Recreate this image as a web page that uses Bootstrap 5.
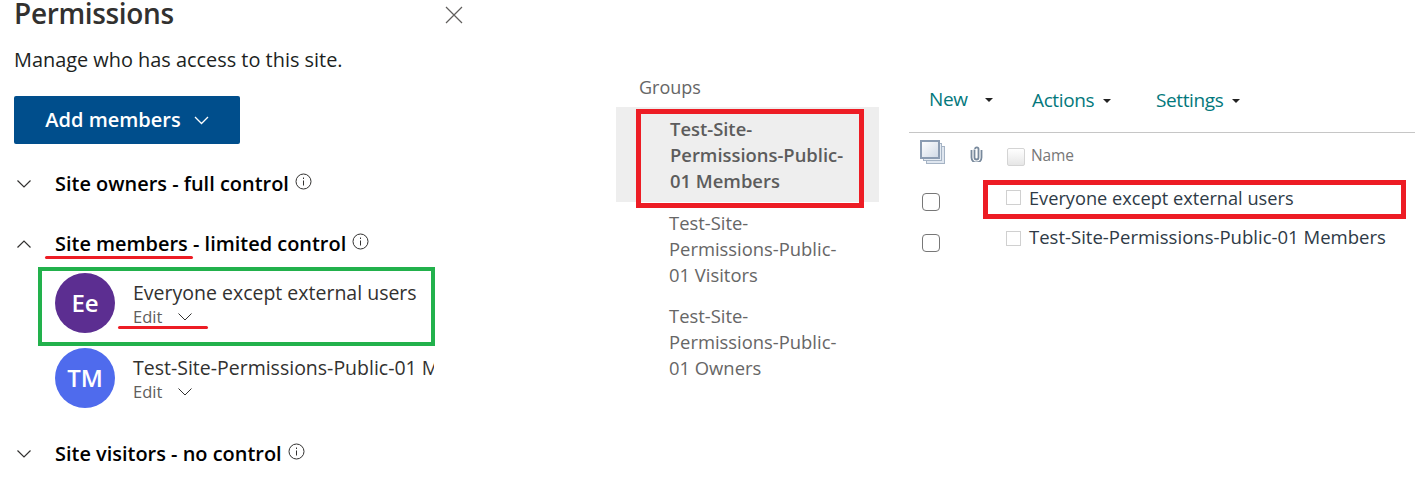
<!doctype html>
<html lang="en"><head><meta charset="utf-8"><title>Permissions</title>
<link rel="stylesheet" href="https://cdn.jsdelivr.net/npm/bootstrap@5.3.0/dist/css/bootstrap.min.css">
<style>
html,body{height:487px;overflow:hidden}
body{font-family:"Open Sans","Noto Sans","Liberation Sans",sans-serif;background:#fff;position:relative}
.left-pane{width:434px;padding-left:15px;margin-right:182px;flex:none}
.title-row{height:26px;align-items:center;width:448px}
.pane-title{font-size:28px;font-weight:600;color:#323130;margin:0 0 0 -1px;line-height:24px;letter-spacing:-.012em}
.close-x{margin-left:auto;margin-top:3px}
.pane-sub{font-size:19.9px;color:#201f1e;margin:21px 0 0 -1px;line-height:26px}
.add-btn{margin:23px 0 0 -1px;width:226px;height:48px;background:#004e8c;color:#fff;font-size:20px;font-weight:600;border:0;border-radius:2px;padding:0;gap:13px;--bs-btn-hover-bg:#004e8c}
.sec-row{font-size:19.95px;font-weight:600;color:#000;line-height:26px;height:26px}
.sec-chev{width:40px;flex:none;padding-left:2px}
.sec-one{margin-top:27px}.sec-two{margin-top:34px}.sec-three{margin-top:33px}
.info-i{margin:-5px 0 0 6px}
.member{height:60px;margin-left:40px;gap:18px;width:379px;overflow:hidden;white-space:nowrap}
.member-one{margin-top:16px}.member-two{margin-top:15px}
.avatar{width:60px;height:60px;border-radius:50%;color:#fff;font-size:24px;font-weight:600;flex:none}
.av-purple{background:#5c2e91}.av-blue{background:#4f6bed}
.m-name{font-size:19.5px;line-height:26px;color:#323130;margin-top:7px}
.m-edit{font-size:16.5px;line-height:22px;color:#605e5c;gap:16px}
.mid-pane{width:263px;margin-right:30px;flex:none;padding-top:75px}
.grp-head{font-size:18px;line-height:25px;color:#666;padding-left:23px;height:32px}
.grp-item{font-size:18.4px;line-height:26px;color:#666;padding:9px 30px 8px 53px}
.grp-active{background:#eee;font-weight:600;padding:9px 20px 8px 54px;color:#5c5c5c}
.grp-plain{padding-bottom:7px;padding-top:8px}
.right-pane{flex:1 1 auto;min-width:0}
.toolbar{margin-top:76px;border-bottom:1px solid #c6c6c6;padding:11px 0 0 20px;font-size:19px;color:#03787c;line-height:26px;box-sizing:content-box;height:45px;align-items:flex-start;letter-spacing:-.02em}
.tool-item{gap:9px}
.caret-tri{width:0;height:0;border-left:4.5px solid transparent;border-right:4.5px solid transparent;border-top:4.5px solid #222;margin-top:1px}
.tb-new{width:103px;margin-top:-1px}.tb-act{width:124px}
.name-head{margin-left:11px;height:55px;align-items:flex-start;padding-top:7px}
.att-ico{margin:6px 0 0 24px}
.hd-box{width:18px;height:18px;border:1px solid #d4d4d4;border-radius:2px;background:linear-gradient(#fff,#e6e6e6);margin:8px 6px 0 24px}
.hd-name{font-size:15.5px;color:#777;margin-top:4px;letter-spacing:-.01em}
.row-line{height:41px;margin-left:13px}
.chk{width:18px;height:18px;border:1px solid #777;border-radius:4px;background:#fff;flex:none;margin-top:5px}
.sq{width:15px;height:15px;border:1px solid #d0d0d0;flex:none;margin:2px 8px 0 66px}
.nm{font-size:18.2px;color:#2e3a46;white-space:nowrap;line-height:26px;margin-top:-3px}
.nm-long{font-size:18.55px;margin-top:-5px}
.mark-box{position:absolute;pointer-events:none}
.mk-red{border:5px solid #ed1c24}
.mk-green{border:4px solid #22b14c}
.ul-red{position:absolute;height:3px;background:#ed1c24;border-radius:2px}
</style></head>
<body>
<div class="d-flex align-items-start">
  <div class="left-pane">
    <div class="d-flex title-row">
      <h1 class="pane-title">Permissions</h1>
      <svg class="close-x" width="18" height="18" viewBox="0 0 18 18" fill="none" stroke="#605e5c" stroke-width="1.2"><path d="M1 1l16 16M17 1L1 17"/></svg>
    </div>
    <p class="pane-sub">Manage who has access to this site.</p>
    <button class="btn add-btn d-flex align-items-center justify-content-center">Add members
      <svg width="15" height="9" viewBox="0 0 15 9" fill="none" stroke="#fff" stroke-width="1.3"><path d="M1 1l6.500 6.500L14 1"/></svg></button>
    <div class="d-flex align-items-center sec-row sec-one">
      <span class="sec-chev"><svg class="d-block" width="14" height="8" viewBox="0 0 14 8" fill="none" stroke="#323130" stroke-width="1.2"><path d="M.5.5L7 7l6.500-6.500"/></svg></span>
      <span>Site owners - full control</span>
      <svg class="info-i" width="17" height="17" viewBox="0 0 17 17" fill="none" stroke="#323130"><circle cx="8.500" cy="8.500" r="7.500"/><path d="M8.500 7.500v5M8.500 4.500v1.500"/></svg>
    </div>
    <div class="d-flex align-items-center sec-row sec-two">
      <span class="sec-chev"><svg class="d-block" width="14" height="8" viewBox="0 0 14 8" fill="none" stroke="#323130" stroke-width="1.2"><path d="M.5 7.500L7 1l6.500 6.500"/></svg></span>
      <span>Site members - limited control</span>
      <svg class="info-i" width="17" height="17" viewBox="0 0 17 17" fill="none" stroke="#323130"><circle cx="8.500" cy="8.500" r="7.500"/><path d="M8.500 7.500v5M8.500 4.500v1.500"/></svg>
    </div>
    <div class="d-flex member member-one">
      <div class="avatar av-purple d-flex align-items-center justify-content-center">Ee</div>
      <div><div class="m-name">Everyone except external users</div>
        <div class="m-edit d-flex align-items-center">Edit <svg width="14" height="8" viewBox="0 0 14 8" fill="none" stroke="#323130" stroke-width="1"><path d="M.5.5L7 7l6.500-6.500"/></svg></div></div>
    </div>
    <div class="d-flex member member-two">
      <div class="avatar av-blue d-flex align-items-center justify-content-center">TM</div>
      <div><div class="m-name">Test-Site-Permissions-Public-01 Members</div>
        <div class="m-edit d-flex align-items-center">Edit <svg width="14" height="8" viewBox="0 0 14 8" fill="none" stroke="#323130" stroke-width="1"><path d="M.5.5L7 7l6.500-6.500"/></svg></div></div>
    </div>
    <div class="d-flex align-items-center sec-row sec-three">
      <span class="sec-chev"><svg class="d-block" width="14" height="8" viewBox="0 0 14 8" fill="none" stroke="#323130" stroke-width="1.2"><path d="M.5.5L7 7l6.500-6.500"/></svg></span>
      <span>Site visitors - no control</span>
      <svg class="info-i" width="17" height="17" viewBox="0 0 17 17" fill="none" stroke="#323130"><circle cx="8.500" cy="8.500" r="7.500"/><path d="M8.500 7.500v5M8.500 4.500v1.500"/></svg>
    </div>
  </div>
  <div class="mid-pane">
    <div class="grp-head">Groups</div>
    <div class="grp-item grp-active">Test-Site-Permissions-Public-01 Members</div>
    <div class="grp-item grp-plain">Test-Site-Permissions-Public-01 Visitors</div>
    <div class="grp-item grp-plain">Test-Site-Permissions-Public-01 Owners</div>
  </div>
  <div class="right-pane">
    <div class="toolbar d-flex">
      <div class="d-flex align-items-center tool-item tb-new"><span>New</span><span class="caret-tri ms-2"></span></div>
      <div class="d-flex align-items-center tool-item tb-act"><span>Actions</span><span class="caret-tri"></span></div>
      <div class="d-flex align-items-center tool-item"><span>Settings</span><span class="caret-tri"></span></div>
    </div>
    <div class="d-flex name-head">
      <svg width="26" height="25" viewBox="0 0 26 25"><defs><linearGradient id="stk" x1="0" y1="0" x2="1" y2="1"><stop offset="0" stop-color="#fff"/><stop offset="1" stop-color="#cfd9e6"/></linearGradient></defs><rect x="6.500" y="6.500" width="18" height="17" fill="#dfe6ef" stroke="#a5b3c4"/><rect x="3.500" y="3.500" width="18" height="17" fill="#e6ecf3" stroke="#a5b3c4"/><rect x="1" y="1" width="18" height="17" fill="url(#stk)" stroke="#8b9cb2" stroke-width="2"/></svg>
      <svg class="att-ico" width="13" height="16" viewBox="0 0 13 16" fill="none" stroke="#78899c" stroke-width="1.8"><path d="M4.500 3.500v8a2 2 0 0 0 4 0V3a1.700 1.700 0 0 0-3.400 0"/><path d="M1.500 4v7.500a5 5 0 0 0 10 0V4"/></svg>
      <span class="hd-box"></span>
      <span class="hd-name">Name</span>
    </div>
    <div class="d-flex row-line align-items-start"><span class="chk"></span><span class="sq"></span><span class="nm">Everyone except external users</span></div>
    <div class="d-flex row-line align-items-start"><span class="chk"></span><span class="sq"></span><span class="nm nm-long">Test-Site-Permissions-Public-01 Members</span></div>
  </div>
</div>
<div class="mark-box mk-green" style="left:38px;top:267px;width:397px;height:79px"></div>
<div class="mark-box mk-red" style="left:636px;top:109px;width:228px;height:99px"></div>
<div class="mark-box mk-red" style="left:983px;top:180px;width:423px;height:39px"></div>
<div class="ul-red" style="left:45px;top:256px;width:148px"></div>
<div class="ul-red" style="left:118px;top:326px;width:90px"></div>
</body></html>
